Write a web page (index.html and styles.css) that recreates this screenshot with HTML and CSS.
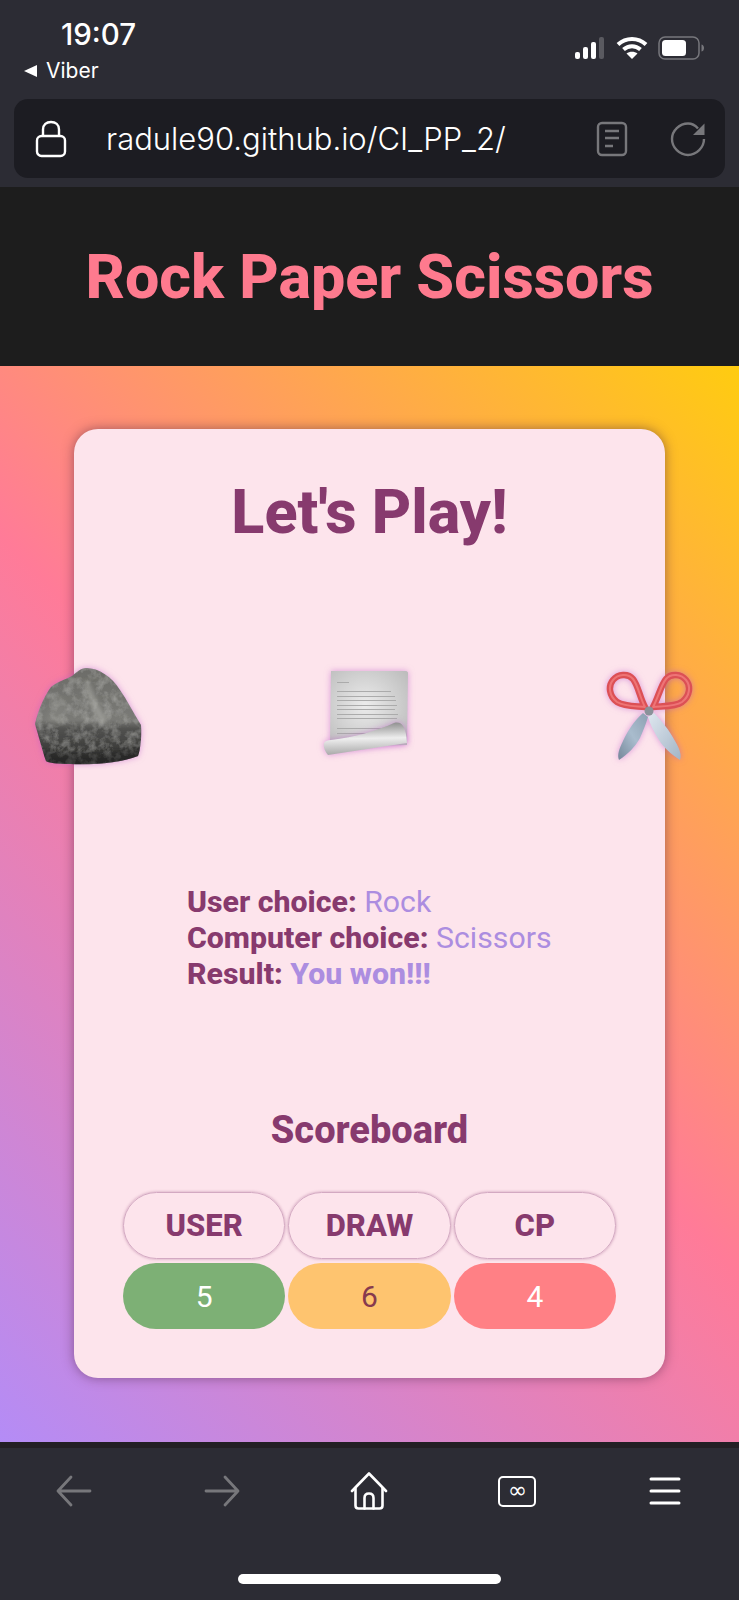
FILE: index.html
```html
<!DOCTYPE html>
<html lang="en">
<head>
    <meta charset="UTF-8">
    <meta name="viewport" content="width=device-width, initial-scale=1.0">
    <title>Rock Paper Scissors</title>
    <link rel="stylesheet" href="styles.css">
</head>
<body>
    <!-- Browser top bar -->
    <div class="topbar">
        <div class="status">
            <div class="status-left">
                <div class="time">19:07</div>
                <div class="back-app"><span class="back-tri"></span>Viber</div>
            </div>
            <div class="status-right">
                <svg width="32" height="24" viewBox="0 0 32 24">
                    <rect x="1" y="16" width="5" height="7" rx="2" fill="#fff"/>
                    <rect x="9" y="11" width="5" height="12" rx="2" fill="#fff"/>
                    <rect x="17" y="6" width="5" height="17" rx="2" fill="#fff"/>
                    <rect x="25" y="1" width="5" height="22" rx="2" fill="#5a5a60"/>
                </svg>
                <svg width="32" height="24" viewBox="0 0 32 24" fill="none" stroke="#fff" stroke-width="4">
                    <path d="M2 8.5C10 1 22 1 30 8.5"/>
                    <path d="M7.5 13.5C12.5 9 19.5 9 24.5 13.5"/>
                    <path d="M16 23L10.5 17.5C13.5 15 18.5 15 21.5 17.5Z" fill="#fff" stroke="none"/>
                </svg>
                <svg width="47" height="24" viewBox="0 0 47 24">
                    <rect x="1" y="1" width="40" height="22" rx="6" fill="none" stroke="#77777c" stroke-width="1.5"/>
                    <rect x="4" y="4" width="24" height="16" rx="3.5" fill="#fff"/>
                    <path d="M43.5 8.5C45.5 9 46 10.5 46 12S45.5 15 43.5 15.5Z" fill="#77777c"/>
                </svg>
            </div>
        </div>
        <div class="urlbar">
            <svg class="lock" width="32" height="38" viewBox="0 0 32 38" fill="none" stroke="#fff" stroke-width="2.4">
                <rect x="2" y="16" width="28" height="20" rx="4.5"/>
                <path d="M8 16V9.5C8 4.5 11.5 2 16 2S24 4.5 24 9.5V16"/>
            </svg>
            <span class="url">radule90.github.io/CI_PP_2/</span>
            <svg class="reader" width="32" height="36" viewBox="0 0 32 36" fill="none" stroke="#77777b" stroke-width="2.4">
                <rect x="2" y="2" width="28" height="32" rx="4"/>
                <path d="M9 10H23M9 17H23M9 25H17"/>
            </svg>
            <svg class="reload" width="36" height="36" viewBox="0 0 36 36" fill="none" stroke="#77777b" stroke-width="2.4">
                <path d="M28 7.5C25 4 21.5 2.5 18 2.5C9.5 2.5 2 9.5 2 18S9.5 34 18 34S34 26.5 34 18"/>
                <path d="M34.5 2.5V14H23Z" fill="#77777b" stroke="none"/>
            </svg>
        </div>
    </div>

    <header class="site-header">
        <h1 class="site-title">Rock Paper Scissors</h1>
    </header>

    <main class="stage">
        <section class="card">
            <h2 class="card-title">Let's Play!</h2>

            <div class="choices">
                <!-- Rock -->
                <svg class="choice" width="130" height="115" viewBox="0 0 130 115">
                    <defs>
                        <linearGradient id="rockFill" x1="0" y1="0" x2="0" y2="1">
                            <stop offset="0" stop-color="#6c6c68"/>
                            <stop offset="0.54" stop-color="#7a7a76"/>
                            <stop offset="0.63" stop-color="#525250"/>
                            <stop offset="1" stop-color="#2d2d2b"/>
                        </linearGradient>
                        <filter id="rockGrain" x="0" y="0" width="100%" height="100%">
                            <feTurbulence type="fractalNoise" baseFrequency="0.13" numOctaves="4" seed="4" result="noise"/>
                            <feColorMatrix in="noise" type="matrix" values="0 0 0 0 0.75  0 0 0 0 0.75  0 0 0 0 0.72  0.5 0 0 0 -0.2" result="spots"/>
                            <feComposite in="spots" in2="SourceAlpha" operator="in" result="clipped"/>
                            <feMerge>
                                <feMergeNode in="SourceGraphic"/>
                                <feMergeNode in="clipped"/>
                            </feMerge>
                        </filter>
                        <filter id="soft"><feGaussianBlur stdDeviation="2.5"/></filter>
                        <clipPath id="rockClip">
                            <path d="M66 13C79 13 92 22 100 35C107 45 113 57 121 70C122 83 120 96 118 101C100 108 75 110 50 109C38 109 28 108 26 106C22 94 18 79 15 69C18 55 25 40 31 32C38 26 47 24 52 21C57 17 61 13 66 13Z"/>
                        </clipPath>
                    </defs>
                    <g class="glow">
                        <path filter="url(#rockGrain)" fill="url(#rockFill)" d="M66 13C79 13 92 22 100 35C107 45 113 57 121 70C122 83 120 96 118 101C100 108 75 110 50 109C38 109 28 108 26 106C22 94 18 79 15 69C18 55 25 40 31 32C38 26 47 24 52 21C57 17 61 13 66 13Z"/>
                    </g>
                    <g clip-path="url(#rockClip)">
                        <path d="M68 26C73 38 78 52 88 66L82 70C72 56 68 40 64 28Z" fill="#b4b4ae" opacity="0.6" filter="url(#soft)"/>
                        <path d="M34 42C42 38 48 46 46 62L38 70L26 66Z" fill="#8d8d88" opacity="0.4" filter="url(#soft)"/>
                        <path d="M10 94C40 100 90 102 125 90V112H10Z" fill="#1f1f1e" opacity="0.5" filter="url(#soft)"/>
                    </g>
                </svg>

                <!-- Paper -->
                <svg class="choice" width="125" height="115" viewBox="0 0 125 115">
                    <defs>
                        <radialGradient id="sheetFill" cx="0.45" cy="0.45" r="0.75">
                            <stop offset="0" stop-color="#ececec"/>
                            <stop offset="1" stop-color="#b8b8b8"/>
                        </radialGradient>
                        <linearGradient id="curlFill" x1="0.25" y1="0" x2="0.3" y2="1">
                            <stop offset="0" stop-color="#8a8a8a"/>
                            <stop offset="0.5" stop-color="#eeeeee"/>
                            <stop offset="1" stop-color="#a8a8a8"/>
                        </linearGradient>
                    </defs>
                    <g class="glow">
                        <path d="M21 16H96C97 16 98 17 98 18L97 90L28 92L20 86Z" fill="url(#sheetFill)"/>
                    </g>
                    <g fill="#ababab">
                        <rect x="27" y="27" width="12" height="1"/>
                        <rect x="27" y="36" width="54" height="1"/>
                        <rect x="27" y="41" width="58" height="1"/>
                        <rect x="27" y="45" width="59" height="1"/>
                        <rect x="27" y="50" width="60" height="1"/>
                        <rect x="27" y="54" width="58" height="1"/>
                        <rect x="27" y="59" width="61" height="1"/>
                        <rect x="27" y="63" width="60" height="1"/>
                        <rect x="27" y="73" width="55" height="1"/>
                        <rect x="27" y="78" width="40" height="1"/>
                    </g>
                    <g class="glow">
                        <path d="M14 88C15 86 18 85 21 85C45 82 66 76 84 68C91 66 96 70 97 88L18 100C15 96 13 92 14 88Z" fill="url(#curlFill)"/>
                    </g>
                </svg>

                <!-- Scissors -->
                <svg class="choice scissors" width="110" height="110" viewBox="0 0 110 110">
                    <defs>
                        <linearGradient id="bladeLeft" x1="1" y1="0" x2="0" y2="1">
                            <stop offset="0" stop-color="#8da0b2"/>
                            <stop offset="0.5" stop-color="#a9bccd"/>
                            <stop offset="1" stop-color="#75879a"/>
                        </linearGradient>
                        <linearGradient id="bladeRight" x1="0" y1="0" x2="1" y2="1">
                            <stop offset="0" stop-color="#dfe7ef"/>
                            <stop offset="1" stop-color="#a3b5c6"/>
                        </linearGradient>
                    </defs>
                    <g class="glow">
                        <path d="M48 53C40 60 33 70 28 81C24 89 22 95 24 100C33 94 40 87 45 78C48 71 51 64 53 57Z" fill="url(#bladeLeft)"/>
                        <path d="M59 53C66 60 75 71 80 81C84 88 87 94 85 100C76 94 69 88 64 80C59 72 55 64 53 57Z" fill="url(#bladeRight)"/>
                        <g fill="none" stroke="#dc5055" stroke-width="6.5" stroke-linejoin="round">
                            <path d="M50 47C42 46 30 47 22 42C14 36 13 26 18 20C23 14 33 13 38 19C43 25 45 38 50 47Z"/>
                            <path d="M58 47C66 46 80 47 87 42C95 36 96 26 91 20C86 14 76 13 71 19C66 25 63 38 58 47Z"/>
                        </g>
                    </g>
                    <g fill="none" stroke="#ee7476" stroke-width="2" stroke-linejoin="round">
                        <path d="M50 47C42 46 30 47 22 42C14 36 13 26 18 20C23 14 33 13 38 19C43 25 45 38 50 47Z"/>
                        <path d="M58 47C66 46 80 47 87 42C95 36 96 26 91 20C86 14 76 13 71 19C66 25 63 38 58 47Z"/>
                    </g>
                    <circle cx="54" cy="51" r="4.5" fill="#8a9299"/>
                </svg>
            </div>

            <div class="results">
                <p><strong>User choice:</strong> Rock</p>
                <p><strong>Computer choice:</strong> Scissors</p>
                <p><strong>Result:</strong> <b>You won!!!</b></p>
            </div>

            <h3 class="score-title">Scoreboard</h3>

            <div class="score-grid">
                <div class="score-head">USER</div>
                <div class="score-head">DRAW</div>
                <div class="score-head">CP</div>
                <div class="score-val val-user">5</div>
                <div class="score-val val-draw">6</div>
                <div class="score-val val-cp">4</div>
            </div>
        </section>
    </main>

    <!-- Browser bottom bar -->
    <div class="toolbar">
        <div class="tool-row">
            <svg class="tool" width="36" height="32" viewBox="0 0 36 32" fill="none" stroke="#77777b" stroke-width="2.8" stroke-linecap="round" stroke-linejoin="round">
                <path d="M34 16H2M15 2L2 16L15 30"/>
            </svg>
            <svg class="tool" width="36" height="32" viewBox="0 0 36 32" fill="none" stroke="#77777b" stroke-width="2.8" stroke-linecap="round" stroke-linejoin="round">
                <path d="M2 16H34M21 2L34 16L21 30"/>
            </svg>
            <svg class="tool" width="38" height="38" viewBox="0 0 38 38" fill="none" stroke="#fff" stroke-width="2.6" stroke-linecap="round" stroke-linejoin="round">
                <path d="M2 19L19 1.5L36 19"/>
                <path d="M5.5 16.5V33.5C5.5 35.5 6.5 36.5 8.5 36.5H29.5C31.5 36.5 32.5 35.5 32.5 33.5V16.5"/>
                <path d="M14.5 36.5V26C14.5 23 16.5 21.5 19 21.5S23.5 23 23.5 26V36.5"/>
            </svg>
            <div class="tabs-btn">∞</div>
            <svg class="tool" width="32" height="28" viewBox="0 0 32 28" fill="none" stroke="#fff" stroke-width="3" stroke-linecap="round">
                <path d="M2 2H30M2 14H30M2 26H30"/>
            </svg>
        </div>
        <div class="home-bar"></div>
    </div>
</body>
</html>
```

FILE: styles.css
```css
/* Basic reset */
* {
    box-sizing: border-box;
    margin: 0;
    padding: 0;
}

body {
    width: 739px;
    height: 1600px;
    overflow: hidden;
    font-family: Roboto, Arial, sans-serif;
    background-color: #2c2c34;
    display: flex;
    flex-direction: column;
}

/* Top bar */
.topbar {
    height: 187px;
    padding: 0 14px 9px;
    background-color: #2c2c34;
    color: #fff;
    font-family: Inter, Arial, sans-serif;
    display: flex;
    flex-direction: column;
    justify-content: flex-end;
    flex-shrink: 0;
}

.status {
    display: flex;
    justify-content: space-between;
    align-items: flex-start;
    height: 90px;
}

.status-left {
    padding-left: 10px;
}

.time {
    font-size: 29.5px;
    font-weight: 500;
    line-height: 34px;
    margin-top: 8px;
    margin-left: 37px;
}

.back-app {
    display: flex;
    align-items: center;
    font-size: 21px;
    line-height: 24px;
    margin-top: 8px;
}

.back-tri {
    width: 0;
    height: 0;
    border-top: 6.5px solid transparent;
    border-bottom: 6.5px solid transparent;
    border-right: 13px solid #fff;
    margin-right: 9px;
}

.status-right {
    display: flex;
    align-items: center;
    gap: 10px;
    margin-top: 27px;
    margin-right: 20px;
}

.urlbar {
    height: 79px;
    border-radius: 14px;
    background-color: #1c1c22;
    display: flex;
    align-items: center;
    padding: 0 19px 0 21px;
}

.url {
    font-size: 31px;
    font-weight: 300;
    margin-left: 39px;
    flex: 1;
}

.reader {
    margin-right: 42px;
}

/* Site header */
.site-header {
    height: 179px;
    background-color: #1d1d1d;
    display: flex;
    align-items: center;
    justify-content: center;
    flex-shrink: 0;
}

.site-title {
    font-size: 61px;
    font-weight: 800;
    color: #fe7a8e;
}

/* Game area */
.stage {
    height: 1076px;
    padding-top: 63px;
    background: linear-gradient(45deg, #b48cf6 0%, #ff7b98 50%, #ffcc10 100%);
    flex-shrink: 0;
}

.card {
    width: 591px;
    margin-left: 74px;
    padding-top: 48px;
    padding-bottom: 49px;
    border-radius: 24px;
    background-color: #fde4ec;
    box-shadow: 0 0 12px rgba(70, 30, 60, 0.5);
    color: #873a6e;
}

.card-title {
    font-size: 61px;
    line-height: 70px;
    font-weight: 800;
    text-align: center;
}

.choices {
    display: flex;
    gap: 160px;
    margin: 108px -54px 0;
}

.choice {
    flex-shrink: 0;
    display: block;
}

.scissors {
    margin-top: 5px;
}

.glow {
    filter: drop-shadow(0 0 3px rgba(190, 90, 200, 0.55));
}

.results {
    margin: 114px 0 0 113px;
    font-size: 30.25px;
    line-height: 36px;
    color: #ac8de0;
}

.results strong,
.results b {
    font-weight: 800;
}

.results strong {
    color: #873a6e;
}

.score-title {
    margin-top: 116px;
    font-size: 38px;
    line-height: 44px;
    font-weight: 800;
    text-align: center;
}

.score-grid {
    display: grid;
    grid-template-columns: repeat(3, 1fr);
    grid-template-rows: 67px 66px;
    gap: 4px 3px;
    margin: 40px 49px 0;
}

.score-head,
.score-val {
    display: flex;
    align-items: center;
    justify-content: center;
    border-radius: 34px;
    font-size: 31px;
}

.score-val {
    font-size: 30px;
}

.score-head {
    font-weight: 800;
    border: 1px solid #d3a9c2;
    box-shadow: 0 0 3px rgba(135, 58, 110, 0.45);
}

.val-user {
    background-color: #7db075;
    color: #fff;
}

.val-draw {
    background-color: #fec46f;
    color: #873a4e;
}

.val-cp {
    background-color: #ff8085;
    color: #fff;
}

/* Bottom bar */
.toolbar {
    flex: 1;
    background-color: #2c2c34;
    border-top: 6px solid #231f24;
}

.tool-row {
    display: grid;
    grid-template-columns: repeat(5, 1fr);
    align-items: center;
    justify-items: center;
    height: 38px;
    margin-top: 24px;
}

.tabs-btn {
    width: 38px;
    height: 31px;
    border: 2.5px solid #fff;
    border-radius: 5px;
    color: #fff;
    font-size: 23px;
    line-height: 24px;
    text-align: center;
    font-family: "DejaVu Sans", sans-serif;
}

.home-bar {
    width: 263px;
    height: 10px;
    margin: 64px auto 0;
    border-radius: 5px;
    background-color: #fff;
}
```
